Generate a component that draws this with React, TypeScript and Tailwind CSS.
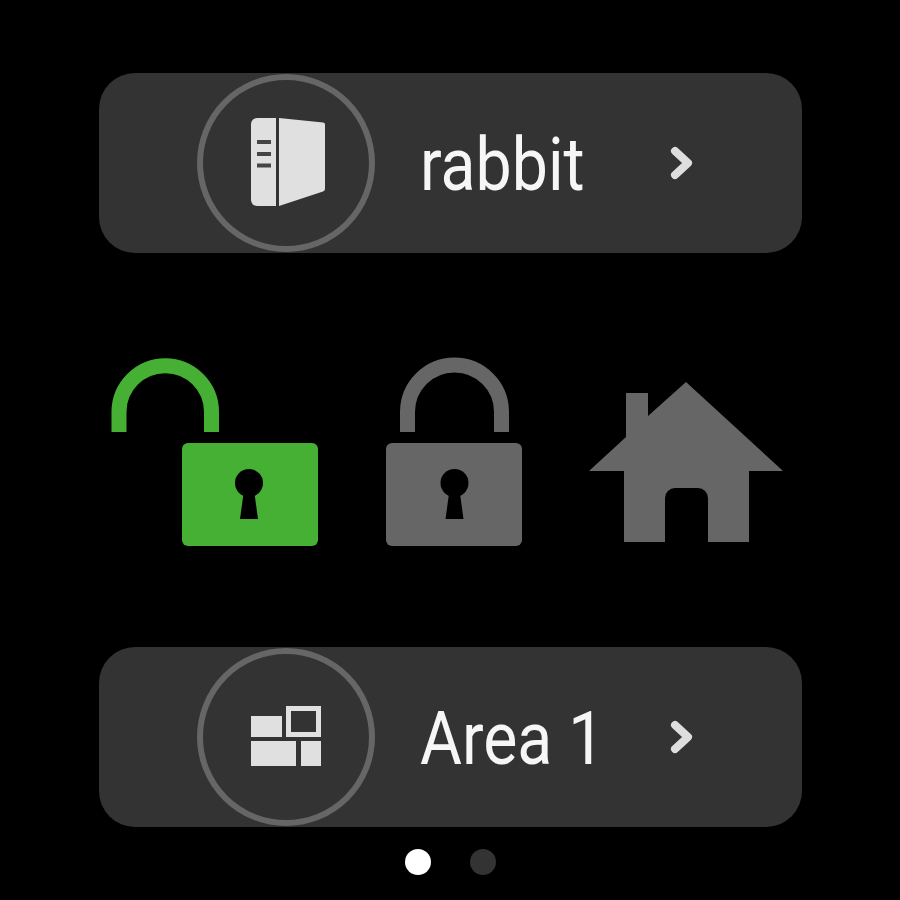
import React from 'react';

const Chevron = () => (
  <svg width="30" height="36" viewBox="0 0 30 36" fill="none" className="shrink-0">
    <path d="M6 6 L19 18 L6 30" stroke="#dedede" strokeWidth="8" strokeLinejoin="round" strokeLinecap="round" />
  </svg>
);

const BookIcon = () => (
  <svg width="78" height="90" viewBox="247 118 78 90" fill="#e0e0e0">
    <path d="M257 118 H276 V206 H257 a6 6 0 0 1 -6 -6 V124 a6 6 0 0 1 6 -6 Z" />
    <path d="M279 118 L323 122.500 Q325 122.700 325 124.500 V189 Q325 191 323 191.400 L279 206 Z" />
    <path d="M257 142 H271 M257 154 H271 M257 165.500 H271" stroke="#444" strokeWidth="4" />
  </svg>
);

const AreaIcon = () => (
  <svg width="76" height="62" viewBox="248 706 76 62" fill="#e0e0e0">
    <rect x="251" y="716" width="31" height="21" />
    <rect x="288.500" y="708.500" width="30" height="26" fill="none" stroke="#e0e0e0" strokeWidth="5" />
    <rect x="251" y="741" width="45" height="25" />
    <rect x="301" y="741" width="20" height="25" />
  </svg>
);

const NavCard = ({ icon, label }: { icon: React.ReactNode; label: string }) => (
  <div className="flex items-center w-[703px] h-[180px] ml-[99px] pl-[98px] rounded-[36px] bg-[#333333]">
    <div className="flex items-center justify-center shrink-0 w-[178px] h-[178px] rounded-full border-[6px] border-[#666666]">
      {icon}
    </div>
    <div className="ml-[45px] w-[249px] shrink-0 pt-[3px]">
      <span className="inline-block origin-left scale-x-[0.87] text-[74px] font-[450] leading-none text-[#f6f6f6] font-['Roboto',sans-serif]">
        {label}
      </span>
    </div>
    <Chevron />
  </div>
);

const Keyhole = ({ cx, fill }: { cx: number; fill: string }) => (
  <g fill={fill}>
    <circle cx={cx} cy="483" r="14" />
    <path d={`M${cx - 5} 490 H${cx + 5} L${cx + 9} 519 H${cx - 9} Z`} />
  </g>
);

const App = () => {
  return (
    <div className="w-[900px] h-[900px] bg-black pt-[73px] overflow-hidden blur-[0.7px]">
      <NavCard icon={<BookIcon />} label="rabbit" />

      {/* Lock and home buttons */}
      <div className="flex items-start mt-[104px] ml-[111px] h-[189px]">
        <svg width="207" height="189" viewBox="111 357 207 189" className="shrink-0">
          <path d="M119 432 V412 a46 46 0 0 1 92.500 0 V432" fill="none" stroke="#46b035" strokeWidth="15" />
          <rect x="182" y="443" width="136" height="103" rx="6" fill="#46b035" />
          <Keyhole cx={249} fill="#000" />
        </svg>
        <svg width="136" height="189" viewBox="386 357 136 189" className="shrink-0 ml-[68px]">
          <path d="M407.500 432 V412 a47 47 0 0 1 94 0 V432" fill="none" stroke="#666666" strokeWidth="15" />
          <rect x="386" y="443" width="136" height="103" rx="6" fill="#666666" />
          <Keyhole cx={454.500} fill="#000" />
        </svg>
        <svg width="194" height="189" viewBox="589 357 194 189" className="shrink-0 ml-[67px]" fill="#666666">
          <path
            fillRule="evenodd"
            d="M686 382 L783 471 H749 V542 H708 V498 a10 10 0 0 0 -10 -10 H675 a10 10 0 0 0 -10 10 V542 H624 V471 H589 L626 437 V393 H648 V416 Z"
          />
        </svg>
      </div>

      <div className="mt-[101px]">
        <NavCard icon={<AreaIcon />} label="Area 1" />
      </div>

      {/* Page dots */}
      <div className="flex justify-center gap-[39px] mt-[22px] pl-px">
        <div className="w-[26px] h-[26px] rounded-full bg-white" />
        <div className="w-[26px] h-[26px] rounded-full bg-[#333333]" />
      </div>
    </div>
  );
};

export default App;
